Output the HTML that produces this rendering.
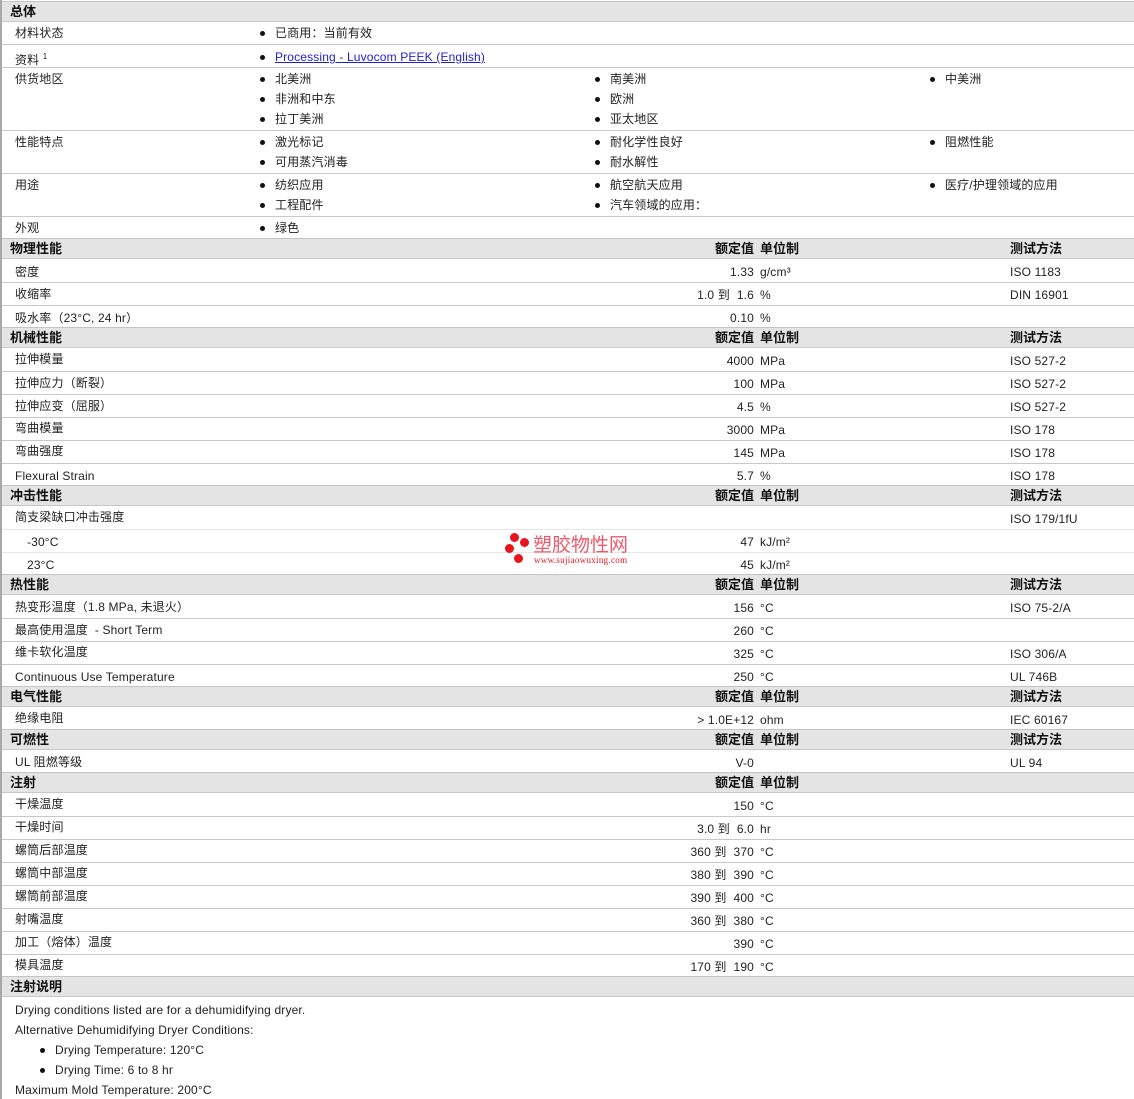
<!DOCTYPE html>
<html><head><meta charset="utf-8"><style>
body{margin:0;width:1134px;height:1099px;position:relative;overflow:hidden;background:#fff;font-family:"Liberation Sans","Noto Sans CJK SC",sans-serif;font-size:12px;color:#222}
.t{position:absolute;line-height:14px;white-space:nowrap;margin-top:1px;letter-spacing:0.15px}
.r{position:absolute;line-height:14px;white-space:nowrap;right:380px;text-align:right;margin-top:1px;letter-spacing:0.15px}
.h{position:absolute;left:2px;right:0;height:19px;background:#e4e4e4;border-top:1px solid #c4c4c4;border-bottom:1px solid #c8c8cc}
.h b{position:absolute;top:2px;left:8px;font-size:13px;line-height:15px;color:#111}
.h .a{left:auto;right:380px}
.h .u{left:758px}
.h .m{left:1008px}
.l{position:absolute;left:2px;right:0;height:0;border-top:1px solid #c8c8c8}
.l2{position:absolute;left:2px;right:0;height:0;border-top:1px solid #e6e6e6}
.d{position:absolute;width:5px;height:5px;border-radius:50%;background:#111;margin-top:1px}
#lb{position:absolute;left:0;top:0;width:2px;height:1099px;background:#a8a8a8}
a{color:#2020cc}
</style></head><body>
<div id="lb"></div>

<div class="h" style="top:1px"><b>总体</b></div>
<div class="t" style="left:15px;top:25px">材料状态</div>
<div class="d" style="left:260px;top:30px"></div><div class="t" style="left:275px;top:25px">已商用：当前有效</div>
<div class="l" style="top:44px"></div>
<div class="t" style="left:15px;top:49px">资料 <sup style="font-size:8px">1</sup></div>
<div class="d" style="left:260px;top:54px"></div><div class="t" style="left:275px;top:49px"><a href="#">Processing - Luvocom PEEK (English)</a></div>
<div class="l" style="top:67px"></div>
<div class="t" style="left:15px;top:71px">供货地区</div>
<div class="d" style="left:260px;top:76px"></div><div class="t" style="left:275px;top:71px">北美洲</div>
<div class="d" style="left:260px;top:96px"></div><div class="t" style="left:275px;top:91px">非洲和中东</div>
<div class="d" style="left:260px;top:116px"></div><div class="t" style="left:275px;top:111px">拉丁美洲</div>
<div class="d" style="left:595px;top:76px"></div><div class="t" style="left:610px;top:71px">南美洲</div>
<div class="d" style="left:595px;top:96px"></div><div class="t" style="left:610px;top:91px">欧洲</div>
<div class="d" style="left:595px;top:116px"></div><div class="t" style="left:610px;top:111px">亚太地区</div>
<div class="d" style="left:930px;top:76px"></div><div class="t" style="left:945px;top:71px">中美洲</div>
<div class="l" style="top:130px"></div>
<div class="t" style="left:15px;top:134px">性能特点</div>
<div class="d" style="left:260px;top:139px"></div><div class="t" style="left:275px;top:134px">激光标记</div>
<div class="d" style="left:260px;top:159px"></div><div class="t" style="left:275px;top:154px">可用蒸汽消毒</div>
<div class="d" style="left:595px;top:139px"></div><div class="t" style="left:610px;top:134px">耐化学性良好</div>
<div class="d" style="left:595px;top:159px"></div><div class="t" style="left:610px;top:154px">耐水解性</div>
<div class="d" style="left:930px;top:139px"></div><div class="t" style="left:945px;top:134px">阻燃性能</div>
<div class="l" style="top:173px"></div>
<div class="t" style="left:15px;top:177px">用途</div>
<div class="d" style="left:260px;top:182px"></div><div class="t" style="left:275px;top:177px">纺织应用</div>
<div class="d" style="left:260px;top:202px"></div><div class="t" style="left:275px;top:197px">工程配件</div>
<div class="d" style="left:595px;top:182px"></div><div class="t" style="left:610px;top:177px">航空航天应用</div>
<div class="d" style="left:595px;top:202px"></div><div class="t" style="left:610px;top:197px">汽车领域的应用：</div>
<div class="d" style="left:930px;top:182px"></div><div class="t" style="left:945px;top:177px">医疗/护理领域的应用</div>
<div class="l" style="top:216px"></div>
<div class="t" style="left:15px;top:220px">外观</div>
<div class="d" style="left:260px;top:225px"></div><div class="t" style="left:275px;top:220px">绿色</div>

<div class="h" style="top:238px"><b>物理性能</b><b class="a">额定值</b><b class="u">单位制</b><b class="m">测试方法</b></div>
<div class="t" style="left:15px;top:264px">密度</div><div class="r" style="top:264px">1.33</div><div class="t" style="left:760px;top:264px">g/cm³</div><div class="t" style="left:1010px;top:264px">ISO 1183</div>
<div class="l" style="top:282px"></div>
<div class="t" style="left:15px;top:286px">收缩率</div><div class="r" style="top:287px">1.0 到 &nbsp;1.6</div><div class="t" style="left:760px;top:287px">%</div><div class="t" style="left:1010px;top:287px">DIN 16901</div>
<div class="l" style="top:305px"></div>
<div class="t" style="left:15px;top:310px">吸水率（23°C, 24 hr）</div><div class="r" style="top:310px">0.10</div><div class="t" style="left:760px;top:310px">%</div>

<div class="h" style="top:327px"><b>机械性能</b><b class="a">额定值</b><b class="u">单位制</b><b class="m">测试方法</b></div>
<div class="t" style="left:15px;top:351px">拉伸模量</div><div class="r" style="top:353px">4000</div><div class="t" style="left:760px;top:353px">MPa</div><div class="t" style="left:1010px;top:353px">ISO 527-2</div>
<div class="l" style="top:371px"></div>
<div class="t" style="left:15px;top:375px">拉伸应力（断裂）</div><div class="r" style="top:376px">100</div><div class="t" style="left:760px;top:376px">MPa</div><div class="t" style="left:1010px;top:376px">ISO 527-2</div>
<div class="l" style="top:394px"></div>
<div class="t" style="left:15px;top:398px">拉伸应变（屈服）</div><div class="r" style="top:399px">4.5</div><div class="t" style="left:760px;top:399px">%</div><div class="t" style="left:1010px;top:399px">ISO 527-2</div>
<div class="l" style="top:417px"></div>
<div class="t" style="left:15px;top:420px">弯曲模量</div><div class="r" style="top:422px">3000</div><div class="t" style="left:760px;top:422px">MPa</div><div class="t" style="left:1010px;top:422px">ISO 178</div>
<div class="l" style="top:440px"></div>
<div class="t" style="left:15px;top:443px">弯曲强度</div><div class="r" style="top:445px">145</div><div class="t" style="left:760px;top:445px">MPa</div><div class="t" style="left:1010px;top:445px">ISO 178</div>
<div class="l" style="top:463px"></div>
<div class="t" style="left:15px;top:468px">Flexural Strain</div><div class="r" style="top:468px">5.7</div><div class="t" style="left:760px;top:468px">%</div><div class="t" style="left:1010px;top:468px">ISO 178</div>

<div class="h" style="top:485px"><b>冲击性能</b><b class="a">额定值</b><b class="u">单位制</b><b class="m">测试方法</b></div>
<div class="t" style="left:15px;top:509px">简支梁缺口冲击强度</div><div class="t" style="left:1010px;top:511px">ISO 179/1fU</div>
<div class="l2" style="top:529px"></div>
<div class="t" style="left:27px;top:534px">-30°C</div><div class="r" style="top:534px">47</div><div class="t" style="left:760px;top:534px">kJ/m²</div>
<div class="l2" style="top:552px"></div>
<div class="t" style="left:27px;top:557px">23°C</div><div class="r" style="top:557px">45</div><div class="t" style="left:760px;top:557px">kJ/m²</div>

<div style="position:absolute;left:505px;top:533px;width:24px;height:32px">
<div style="position:absolute;left:5px;top:0;width:9px;height:9px;border-radius:50%;background:#e8141c"></div>
<div style="position:absolute;left:15px;top:5px;width:9px;height:9px;border-radius:50%;background:#e8141c"></div>
<div style="position:absolute;left:0;top:11px;width:9px;height:9px;border-radius:50%;background:#e8141c"></div>
<div style="position:absolute;left:9px;top:21px;width:9px;height:9px;border-radius:50%;background:#e8141c"></div>
</div>
<div style="position:absolute;white-space:nowrap;left:533px;top:536px;font-size:19px;line-height:20px;color:#ec5a6a">塑胶物性网</div>
<div style="position:absolute;white-space:nowrap;left:534px;top:556px;font-size:9px;line-height:9px;color:#e8141c;font-family:'Liberation Serif',serif;letter-spacing:0.3px">www.sujiaowuxing.com</div>

<div class="h" style="top:574px"><b>热性能</b><b class="a">额定值</b><b class="u">单位制</b><b class="m">测试方法</b></div>
<div class="t" style="left:15px;top:599px">热变形温度（1.8 MPa, 未退火）</div><div class="r" style="top:600px">156</div><div class="t" style="left:760px;top:600px">°C</div><div class="t" style="left:1010px;top:600px">ISO 75-2/A</div>
<div class="l" style="top:618px"></div>
<div class="t" style="left:15px;top:622px">最高使用温度 &nbsp;- Short Term</div><div class="r" style="top:623px">260</div><div class="t" style="left:760px;top:623px">°C</div>
<div class="l" style="top:641px"></div>
<div class="t" style="left:15px;top:644px">维卡软化温度</div><div class="r" style="top:646px">325</div><div class="t" style="left:760px;top:646px">°C</div><div class="t" style="left:1010px;top:646px">ISO 306/A</div>
<div class="l" style="top:664px"></div>
<div class="t" style="left:15px;top:669px">Continuous Use Temperature</div><div class="r" style="top:669px">250</div><div class="t" style="left:760px;top:669px">°C</div><div class="t" style="left:1010px;top:669px">UL 746B</div>

<div class="h" style="top:686px"><b>电气性能</b><b class="a">额定值</b><b class="u">单位制</b><b class="m">测试方法</b></div>
<div class="t" style="left:15px;top:710px">绝缘电阻</div><div class="r" style="top:712px">&gt; 1.0E+12</div><div class="t" style="left:760px;top:712px">ohm</div><div class="t" style="left:1010px;top:712px">IEC 60167</div>

<div class="h" style="top:729px"><b>可燃性</b><b class="a">额定值</b><b class="u">单位制</b><b class="m">测试方法</b></div>
<div class="t" style="left:15px;top:754px">UL 阻燃等级</div><div class="r" style="top:755px">V-0</div><div class="t" style="left:1010px;top:755px">UL 94</div>

<div class="h" style="top:772px"><b>注射</b><b class="a">额定值</b><b class="u">单位制</b></div>
<div class="t" style="left:15px;top:796px">干燥温度</div><div class="r" style="top:798px">150</div><div class="t" style="left:760px;top:798px">°C</div>
<div class="l" style="top:816px"></div>
<div class="t" style="left:15px;top:819px">干燥时间</div><div class="r" style="top:821px">3.0 到 &nbsp;6.0</div><div class="t" style="left:760px;top:821px">hr</div>
<div class="l" style="top:839px"></div>
<div class="t" style="left:15px;top:842px">螺筒后部温度</div><div class="r" style="top:844px">360 到 &nbsp;370</div><div class="t" style="left:760px;top:844px">°C</div>
<div class="l" style="top:862px"></div>
<div class="t" style="left:15px;top:865px">螺筒中部温度</div><div class="r" style="top:867px">380 到 &nbsp;390</div><div class="t" style="left:760px;top:867px">°C</div>
<div class="l" style="top:885px"></div>
<div class="t" style="left:15px;top:888px">螺筒前部温度</div><div class="r" style="top:890px">390 到 &nbsp;400</div><div class="t" style="left:760px;top:890px">°C</div>
<div class="l" style="top:908px"></div>
<div class="t" style="left:15px;top:911px">射嘴温度</div><div class="r" style="top:913px">360 到 &nbsp;380</div><div class="t" style="left:760px;top:913px">°C</div>
<div class="l" style="top:931px"></div>
<div class="t" style="left:15px;top:934px">加工（熔体）温度</div><div class="r" style="top:936px">390</div><div class="t" style="left:760px;top:936px">°C</div>
<div class="l" style="top:954px"></div>
<div class="t" style="left:15px;top:957px">模具温度</div><div class="r" style="top:959px">170 到 &nbsp;190</div><div class="t" style="left:760px;top:959px">°C</div>

<div class="h" style="top:976px"><b>注射说明</b></div>
<div class="t" style="left:15px;top:1002px">Drying conditions listed are for a dehumidifying dryer.</div>
<div class="t" style="left:15px;top:1022px">Alternative Dehumidifying Dryer Conditions:</div>
<div class="d" style="left:40px;top:1047px"></div><div class="t" style="left:55px;top:1042px">Drying Temperature: 120°C</div>
<div class="d" style="left:40px;top:1067px"></div><div class="t" style="left:55px;top:1062px">Drying Time: 6 to 8 hr</div>
<div class="t" style="left:15px;top:1082px">Maximum Mold Temperature: 200°C</div>
</body></html>
